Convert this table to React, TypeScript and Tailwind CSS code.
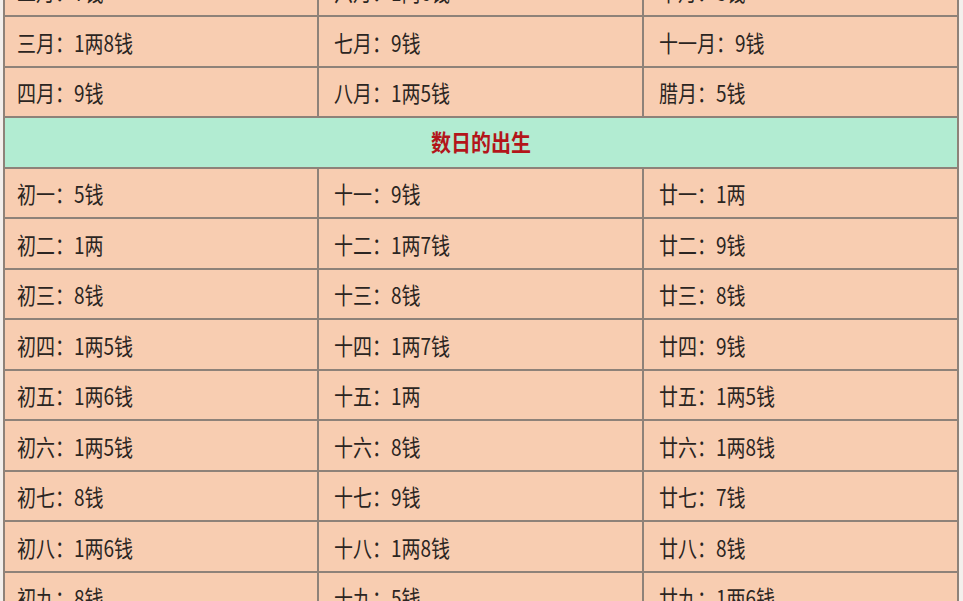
import React from "react";

type Row = [string, string, string];

const monthRows: Row[] = [
  ["二月：7钱", "六月：1两6钱", "十月：8钱"],
  ["三月：1两8钱", "七月：9钱", "十一月：9钱"],
  ["四月：9钱", "八月：1两5钱", "腊月：5钱"],
];

const dayRows: Row[] = [
  ["初一：5钱", "十一：9钱", "廿一：1两"],
  ["初二：1两", "十二：1两7钱", "廿二：9钱"],
  ["初三：8钱", "十三：8钱", "廿三：8钱"],
  ["初四：1两5钱", "十四：1两7钱", "廿四：9钱"],
  ["初五：1两6钱", "十五：1两", "廿五：1两5钱"],
  ["初六：1两5钱", "十六：8钱", "廿六：1两8钱"],
  ["初七：8钱", "十七：9钱", "廿七：7钱"],
  ["初八：1两6钱", "十八：1两8钱", "廿八：8钱"],
  ["初九：8钱", "十九：5钱", "廿九：1两6钱"],
];

function Cell({ text, first, w }: { text: string; first?: boolean; w: string }) {
  return (
    <div
      className={`${w} h-full flex items-center border-r-2 border-[#8e8279] bg-[#f8cdb1] ${
        first ? "pl-[12px]" : "pl-[15px]"
      }`}
    >
      <span className="inline-block scale-y-[1.2] text-[19px] leading-none text-[#2b2522]">{text}</span>
    </div>
  );
}

function DataRow({ row }: { row: Row }) {
  return (
    <div className="flex h-[50.5px] border-b-2 border-[#8e8279]">
      <Cell text={row[0]} first w="w-[314px]" />
      <Cell text={row[1]} w="w-[325px]" />
      <Cell text={row[2]} w="w-[315px]" />
    </div>
  );
}

export default function App() {
  return (
    <div
      className="w-[963px] h-[601px] overflow-hidden bg-[#f3efec] pl-[3px]"
      style={{ fontFamily: '"Noto Sans CJK SC", "Noto Sans", sans-serif' }}
    >
      <div className="mt-[-33.5px] w-[956px] border-l-2 border-[#8e8279]">
        {monthRows.map((r, i) => (
          <DataRow key={"m" + i} row={r} />
        ))}
        <div className="flex h-[50.5px] items-center justify-center border-b-2 border-r-2 border-[#8e8279] bg-[#b2ecd2]">
          <span className="inline-block scale-y-[1.15] text-[20px] font-bold leading-none text-[#b3151a]">
            数日的出生
          </span>
        </div>
        {dayRows.map((r, i) => (
          <DataRow key={"d" + i} row={r} />
        ))}
      </div>
    </div>
  );
}
